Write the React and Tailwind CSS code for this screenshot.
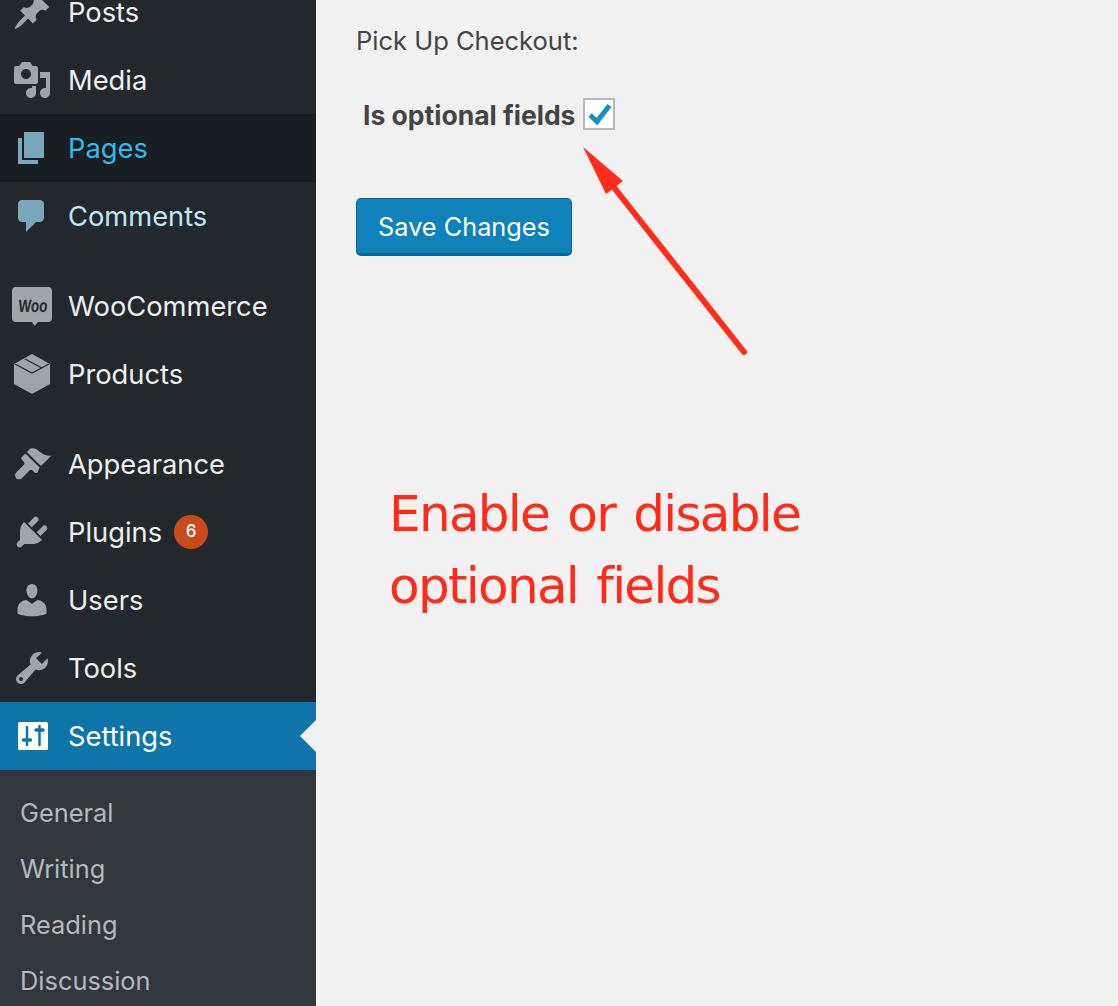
const icons = {
  posts: 'M10.44 3.02l1.82-1.82 6.36 6.35-1.83 1.82c-1.05-.68-2.48-.57-3.41.36l-.75.75c-.92.93-1.04 2.35-.35 3.41l-1.83 1.82-2.41-2.41-2.8 2.79c-.42.42-3.38 2.71-3.8 2.29s1.86-3.39 2.28-3.81l2.79-2.79L4.1 9.36l1.83-1.82c1.05.69 2.48.57 3.4-.36l.75-.75c.93-.92 1.05-2.35.36-3.41z',
  media: 'M13 11V4c0-.55-.45-1-1-1h-1.67L9 1H5L3.67 3H2c-.55 0-1 .45-1 1v7c0 .55.45 1 1 1h10c.55 0 1-.45 1-1zM7 4.5c1.38 0 2.5 1.12 2.5 2.5S8.38 9.5 7 9.5 4.5 8.38 4.5 7 5.62 4.5 7 4.5zM14 6h5v10.5c0 1.38-1.12 2.5-2.5 2.5S14 17.88 14 16.5s1.12-2.5 2.5-2.5c.17 0 .34.02.5.05V9h-3V6zm-4 8.05V13h2v3.5c0 1.38-1.12 2.5-2.5 2.5S7 17.88 7 16.5 8.12 14 9.5 14c.17 0 .34.02.5.05z',
  pages: 'M6 15V2h10v13H6zm-1 1h8v2H3V5h2v11z',
  comments: 'M5 2h9c1.1 0 2 .9 2 2v7c0 1.1-.9 2-2 2h-2l-5 5v-5H5c-1.1 0-2-.9-2-2V4c0-1.1.9-2 2-2z',
  appearance: 'M14.48 11.06L7.41 3.99l1.5-1.5c.5-.56 2.3-.47 3.51.32 1.21.8 1.43 1.28 2.91 2.1 1.18.64 2.45 1.26 4.45.85zm-.71.71L6.7 4.7 4.93 6.47c-.39.39-.39 1.02 0 1.41l1.06 1.06c.39.39.39 1.02 0 1.41l-3.89 3.89c-.78.78-.78 2.05 0 2.83s2.05.78 2.83 0l3.89-3.89c.39-.39 1.02-.39 1.41 0l1.06 1.06c.39.39 1.02.39 1.41 0z',
  plugins: 'M13.11 4.36L9.87 7.6 8 5.73l3.24-3.24c.35-.34 1.05-.2 1.56.32.52.51.66 1.21.31 1.55zm-8 1.77l.91-1.12 9.01 9.01-1.19.84c-.71.71-2.63 1.16-3.82 1.16H6.14L4.9 17.26c-.59.59-1.54.59-2.12 0-.59-.58-.59-1.53 0-2.12l1.24-1.24v-3.88c0-1.13.4-3.19 1.09-3.89zm7.26 3.97l3.24-3.24c.34-.35 1.04-.21 1.55.31.52.51.66 1.21.31 1.55l-3.24 3.25z',
  users: 'M10 9.25c-2.27 0-2.73-3.44-2.73-3.44C7 4.02 7.82 2 9.97 2c2.16 0 2.98 2.02 2.71 3.81 0 0-.41 3.44-2.68 3.44zm0 2.57L12.72 10c2.39 0 4.52 2.33 4.52 4.53v2.49s-3.65 1.13-7.24 1.13c-3.65 0-7.24-1.13-7.24-1.13v-2.49c0-2.25 1.94-4.48 4.47-4.48z',
  tools: 'M16.68 9.77c-1.34 1.34-3.3 1.67-4.95.99l-5.41 6.52c-.99.99-2.59.99-3.58 0s-.99-2.59 0-3.57l6.52-5.42c-.68-1.65-.35-3.61.99-4.95 1.28-1.28 3.12-1.62 4.72-1.06l-2.89 2.89 2.82 2.82 2.86-2.87c.53 1.58.18 3.39-1.08 4.65zM3.81 16.21c.4.39 1.04.39 1.43 0 .4-.4.4-1.04 0-1.43-.39-.4-1.03-.4-1.43 0-.39.39-.39 1.03 0 1.43z',
};

const DashIcon = ({ name, color = 'text-[#a0a5aa]' }) => (
  <svg viewBox="0 0 20 20" className={`w-10 h-10 ml-3 shrink-0 fill-current ${color}`}>
    <path d={icons[name]} />
  </svg>
);

const WooIcon = () => (
  <svg viewBox="0 0 40 40" className="w-10 h-10 ml-3 shrink-0">
    <path d="M4 1h32a4 4 0 0 1 4 4v27a4 4 0 0 1-4 4H26l-3.500 4-2.500-4H4a4 4 0 0 1-4-4V5a4 4 0 0 1 4-4z" fill="#a0a5aa" />
    <text
      transform="translate(20.500 25.500) scale(.75 1) skewX(-6)"
      textAnchor="middle"
      fontFamily="'Liberation Sans', sans-serif"
      fontSize="18"
      fontWeight="700"
      fill="#23282d"
    >
      Woo
    </text>
  </svg>
);

const BoxIcon = () => (
  <svg viewBox="0 0 40 40" className="w-10 h-10 ml-3 shrink-0">
    <path d="M20 0l18 10v20L20 40 2 30V10z" fill="#a0a5aa" />
    <path d="M3 10l17 9 17-9M13 5l17 9" fill="none" stroke="#23282d" strokeWidth="1.300" />
  </svg>
);

const SettingsIcon = () => (
  <svg viewBox="0 0 40 40" className="w-10 h-10 ml-3 shrink-0">
    <rect x="6" y="6" width="30" height="28" rx="1.500" fill="#ffffff" />
    <path d="M15 11v18M27.500 10v19" stroke="#0f75a9" strokeWidth="2.500" strokeLinecap="round" />
    <path d="M11.500 24h7M24 14h7" stroke="#0f75a9" strokeWidth="3.500" strokeLinecap="round" />
  </svg>
);

const MenuItem = ({ icon, label, rowClass = '', textClass = 'text-[#eeeeee]', children }) => (
  <div className={`relative flex items-center h-[68px] ${rowClass}`}>
    {icon}
    <span className={`ml-4 pt-0.5 text-[27.3px] leading-none ${textClass}`}>{label}</span>
    {children}
  </div>
);

const subItems = ['General', 'Writing', 'Reading', 'Discussion'];

const Sidebar = () => (
  <aside className="w-[316px] shrink-0 bg-[#23282d] overflow-hidden font-['Inter',sans-serif]">
    <div className="-mt-[22px]">
      <MenuItem icon={<DashIcon name="posts" />} label="Posts" />
      <MenuItem icon={<DashIcon name="media" />} label="Media" />
      <MenuItem
        icon={<DashIcon name="pages" color="text-[#7aa7bb]" />}
        label="Pages"
        rowClass="bg-[#191e23]"
        textClass="text-[#33bde6]"
      />
      <MenuItem
        icon={<DashIcon name="comments" color="text-[#7aa7bb]" />}
        label="Comments"
        textClass="text-[#c3e6f0]"
      />
    </div>
    <div className="mt-[22px]">
      <MenuItem icon={<WooIcon />} label="WooCommerce" />
      <MenuItem icon={<BoxIcon />} label="Products" />
    </div>
    <div className="mt-[22px]">
      <MenuItem icon={<DashIcon name="appearance" />} label="Appearance" />
      <MenuItem icon={<DashIcon name="plugins" />} label="Plugins">
        <span className="ml-3 w-[34px] h-[34px] rounded-full bg-[#ca4a1f] text-white text-[17px] font-medium flex items-center justify-center">
          6
        </span>
      </MenuItem>
      <MenuItem icon={<DashIcon name="users" />} label="Users" />
      <MenuItem icon={<DashIcon name="tools" />} label="Tools" />
      <MenuItem icon={<SettingsIcon />} label="Settings" rowClass="bg-[#0f75a9]" textClass="text-white">
        <span className="absolute right-0 top-1/2 -translate-y-1/2 border-y-[16px] border-y-transparent border-r-[16px] border-r-[#f1f1f1]" />
      </MenuItem>
    </div>
    <div className="bg-[#32373c] pt-[15px] pb-4 min-h-[300px]">
      {subItems.map((item) => (
        <div key={item} className="h-14 flex items-center pl-5 text-[25.400px] leading-none text-[#b4b9be]">
          {item}
        </div>
      ))}
    </div>
  </aside>
);

const Arrow = () => (
  <svg viewBox="0 0 1118 1006" className="absolute inset-0 w-full h-full pointer-events-none">
    <path d="M583 147L623 181L606 194z" fill="#ff2d1a" />
    <path d="M612 185L744 352" stroke="#ff2d1a" strokeWidth="6" strokeLinecap="round" fill="none" />
  </svg>
);

export default function App() {
  return (
    <div className="relative flex h-[1006px] overflow-hidden bg-[#f1f1f1]">
      <Sidebar />
      <main className="flex-1 pl-10 font-['Inter',sans-serif] text-[#444444]">
        <p className="mt-[25px] h-8 text-[25.500px] leading-8">Pick Up Checkout:</p>
        <div className="mt-[41px] flex items-center h-8 pl-[7px]">
          <span className="text-[26.500px] font-bold leading-8 translate-y-px">Is optional fields</span>
          <span className="ml-2 w-8 h-8 border-2 border-[#b4b9be] bg-white flex items-center justify-center">
            <svg viewBox="0 0 28 28" className="w-7 h-7">
              <path d="M5 15l7 6.500L24.500 5.500" fill="none" stroke="#1e8cbe" strokeWidth="5" />
            </svg>
          </span>
        </div>
        <button className="mt-[68px] w-[216px] h-[58px] rounded-[5px] bg-[#0f83b9] border border-[#006799] border-b-[3px] pt-[2px] text-white text-[25.300px]">
          Save Changes
        </button>
        <div className="mt-[222px] ml-[33px] text-[50px] leading-[72px] tracking-[-1.700px] [word-spacing:4px] text-[#ff2a17] font-['DejaVu_Sans',sans-serif]">
          Enable or disable
          <br />
          optional fields
        </div>
      </main>
      <Arrow />
    </div>
  );
}
